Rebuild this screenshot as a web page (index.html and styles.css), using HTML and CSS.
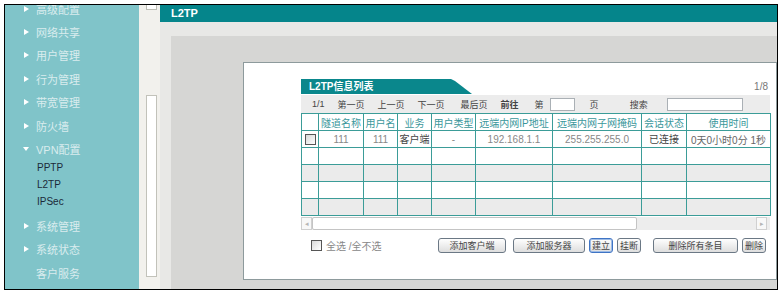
FILE: index.html
```html
<!DOCTYPE html>
<html lang="zh-CN">
<head>
    <meta charset="UTF-8">
    <title>L2TP</title>
    <link rel="stylesheet" href="styles.css">
</head>
<body>
    <div class="frame">
        <div class="sidebar">
            <ul class="nav">
                <li><a class="nav-link"><i class="arrow"></i>高级配置</a></li>
                <li><a class="nav-link"><i class="arrow"></i>网络共享</a></li>
                <li><a class="nav-link"><i class="arrow"></i>用户管理</a></li>
                <li><a class="nav-link"><i class="arrow"></i>行为管理</a></li>
                <li><a class="nav-link"><i class="arrow"></i>带宽管理</a></li>
                <li><a class="nav-link"><i class="arrow"></i>防火墙</a></li>
                <li class="open">
                    <a class="nav-link"><i class="arrow"></i>VPN配置</a>
                    <ul class="sub">
                        <li>PPTP</li>
                        <li>L2TP</li>
                        <li>IPSec</li>
                    </ul>
                </li>
                <li><a class="nav-link"><i class="arrow"></i>系统管理</a></li>
                <li><a class="nav-link"><i class="arrow"></i>系统状态</a></li>
                <li><a class="nav-link plain">客户服务</a></li>
            </ul>
        </div>
        <div class="vscroll">
            <div class="vscroll-btn"></div>
            <div class="vscroll-thumb"></div>
        </div>
        <div class="main">
            <div class="titlebar">L2TP</div>
            <div class="stage">
                <div class="panel">
                    <div class="box">
                        <div class="box-head">
                            <div class="tab">L2TP信息列表</div>
                            <span class="count">1/8</span>
                        </div>
                        <div class="pager">
                            <span>1/1</span>
                            <span>第一页</span>
                            <span>上一页</span>
                            <span>下一页</span>
                            <span class="wide">最后页</span>
                            <span class="goto">前往</span>
                            <span class="wide">第</span>
                            <span class="pg-input"></span>
                            <span class="after-input">页</span>
                            <span class="search-label">搜索</span>
                            <span class="search-input"></span>
                        </div>
                        <table class="grid">
                            <colgroup>
                                <col class="c-chk">
                                <col class="c-name">
                                <col class="c-user">
                                <col class="c-biz">
                                <col class="c-type">
                                <col class="c-ip">
                                <col class="c-mask">
                                <col class="c-state">
                                <col class="c-time">
                            </colgroup>
                            <tr>
                                <th></th>
                                <th>隧道名称</th>
                                <th>用户名</th>
                                <th>业务</th>
                                <th>用户类型</th>
                                <th>远端内网IP地址</th>
                                <th>远端内网子网掩码</th>
                                <th>会话状态</th>
                                <th>使用时间</th>
                            </tr>
                            <tr>
                                <td><span class="check"></span></td>
                                <td>111</td>
                                <td>111</td>
                                <td class="dark">客户端</td>
                                <td>-</td>
                                <td>192.168.1.1</td>
                                <td>255.255.255.0</td>
                                <td class="dark">已连接</td>
                                <td class="time">0天0小时0分 1秒</td>
                            </tr>
                            <tr><td></td><td></td><td></td><td></td><td></td><td></td><td></td><td></td><td></td></tr>
                            <tr class="alt"><td></td><td></td><td></td><td></td><td></td><td></td><td></td><td></td><td></td></tr>
                            <tr><td></td><td></td><td></td><td></td><td></td><td></td><td></td><td></td><td></td></tr>
                            <tr class="alt"><td></td><td></td><td></td><td></td><td></td><td></td><td></td><td></td><td></td></tr>
                        </table>
                        <div class="hscroll">
                            <span class="hs-btn">&#9666;</span>
                            <span class="hs-thumb"></span>
                            <span class="hs-track"></span>
                            <span class="hs-btn">&#9656;</span>
                        </div>
                        <div class="actions">
                            <span class="check"></span>
                            <span class="select-all">全选 /全不选</span>
                            <div class="btns">
                                <button class="btn btn-md">添加客户端</button>
                                <button class="btn btn-lg gap">添加服务器</button>
                                <button class="btn btn-sm focus">建立</button>
                                <button class="btn btn-sm">挂断</button>
                                <button class="btn btn-xl far">删除所有条目</button>
                                <button class="btn btn-sm">删除</button>
                            </div>
                        </div>
                    </div>
                </div>
            </div>
        </div>
    </div>
</body>
</html>
```

FILE: styles.css
```css
body {
    margin: 0;
    background-color: #fff;
    font-family: "Liberation Sans", "Noto Sans CJK SC", sans-serif;
}
.frame {
    margin: 4px;
    width: 772px;
    height: 284px;
    border: 1px solid #000;
    display: flex;
    overflow: hidden;
}

/* left menu */
.sidebar {
    width: 134px;
    flex-shrink: 0;
    background-color: #80c4c9;
    overflow: hidden;
}
.nav {
    list-style: none;
    margin: -8px 0 0;
    padding: 0;
}
.nav-link {
    display: flex;
    align-items: center;
    height: 23.4px;
    padding-left: 19px;
    font-size: 11px;
    color: #d9ecee;
}
.nav-link.plain {
    padding-left: 31px;
}
.arrow {
    width: 0;
    height: 0;
    border-left: 5px solid #fff;
    border-top: 3.5px solid transparent;
    border-bottom: 3.5px solid transparent;
    margin-right: 7px;
}
.open .arrow {
    border-left: 3px solid transparent;
    border-right: 3px solid transparent;
    border-top: 4px solid #fff;
    border-bottom: 0;
    margin-left: -1px;
    margin-right: 7px;
}
.sub {
    list-style: none;
    margin: -2px 0 4.5px;
    padding: 0;
}
.sub li {
    height: 17px;
    line-height: 17px;
    padding-left: 32px;
    font-size: 10px;
    color: #1b2a3a;
}

/* fake window scrollbar */
.vscroll {
    width: 21px;
    flex-shrink: 0;
    background-color: #f2f1ed;
}
.vscroll-btn {
    margin-left: 7px;
    width: 9px;
    height: 4px;
    border: 1px solid #bdbdb5;
    border-top: 0;
    background-color: #fff;
}
.vscroll-thumb {
    margin: 85px 0 0 7px;
    width: 9px;
    height: 180px;
    border: 1px solid #c2c2ba;
    background-color: #fff;
}

/* content */
.main {
    width: 617px;
    flex-shrink: 0;
    display: flex;
    flex-direction: column;
    background-color: #e8e8e6;
}
.titlebar {
    height: 17px;
    line-height: 17px;
    padding-left: 11px;
    background-color: #05858b;
    color: #fff;
    font-size: 11px;
    font-weight: bold;
}
.stage {
    flex: 1;
    padding: 14px 0 0 11px;
}
.panel {
    height: 100%;
    box-sizing: border-box;
    padding: 26px 0 0 72px;
    background-color: #d6d6d4;
}
.box {
    width: 534px;
    height: 218px;
    box-sizing: border-box;
    padding: 16px 6px 0 57px;
    border: 1px solid #8d9a9c;
    background-color: #fff;
}
.box-head {
    display: flex;
    align-items: center;
    height: 15px;
}
.tab {
    width: 171px;
    height: 15px;
    line-height: 15px;
    box-sizing: border-box;
    padding-left: 8px;
    background-color: #0a878c;
    clip-path: polygon(0 0, 150px 0, 154px 2px, 100% 100%, 0 100%);
    color: #fff;
    font-size: 10px;
    font-weight: bold;
}
.count {
    margin-left: auto;
    padding-right: 2px;
    font-size: 10px;
    color: #777;
}
.pager {
    display: flex;
    align-items: center;
    gap: 13px;
    height: 18px;
    margin-top: 1px;
    padding-left: 11px;
    background-color: #ececec;
    font-size: 9px;
    color: #444;
}
.pager .wide {
    margin-left: 3px;
}
.pager .goto {
    font-weight: bold;
}
.pg-input {
    width: 25px;
    height: 13px;
    margin-left: -7px;
    box-sizing: border-box;
    border: 1px solid #aab0b5;
    background-color: #fff;
}
.pager .after-input {
    margin-left: 2px;
}
.pager .search-label {
    margin-left: 18px;
}
.search-input {
    width: 76px;
    height: 13px;
    margin-left: 6px;
    box-sizing: border-box;
    border: 1px solid #aab0b5;
    background-color: #fff;
}

.grid {
    width: 469px;
    table-layout: fixed;
    border-collapse: collapse;
    font-size: 10px;
}
.grid th,
.grid td {
    height: 16px;
    padding: 0;
    border: 1px solid #3b9c98;
    text-align: center;
    font-weight: normal;
    color: #888;
    white-space: nowrap;
    overflow: hidden;
}
.grid th {
    color: #3a979b;
}
.grid td.dark {
    color: #444;
    vertical-align: top;
}
.grid td.time {
    color: #666;
}
.grid tr.alt td {
    background-color: #ebebeb;
}
.c-chk { width: 17px; }
.c-name { width: 45px; }
.c-user { width: 34px; }
.c-biz { width: 34px; }
.c-type { width: 44px; }
.c-ip { width: 77px; }
.c-mask { width: 89px; }
.c-state { width: 45px; }
.c-time { width: 84px; }

.check {
    display: inline-block;
    width: 9px;
    height: 9px;
    border: 1px solid #555;
    background: linear-gradient(135deg, #d8d8d8, #fff);
    vertical-align: middle;
}

.hscroll {
    display: flex;
    height: 13px;
    margin-top: 1px;
    background-color: #ededed;
}
.hs-btn {
    width: 11px;
    box-sizing: border-box;
    border: 1px solid #d0d0d0;
    background-color: #f8f8f8;
    color: #b5b5b5;
    font-size: 7px;
    line-height: 11px;
    text-align: center;
}
.hs-thumb {
    width: 325px;
    box-sizing: border-box;
    border: 1px solid #c4c4c4;
    border-radius: 2px;
    background-color: #fff;
}
.hs-track {
    flex: 1;
}
.hs-btn:last-child {
    margin-right: 3px;
}

.actions {
    display: flex;
    align-items: center;
    height: 16px;
    margin-top: 7px;
    padding-left: 10px;
}
.select-all {
    margin-left: 4px;
    font-size: 10px;
    color: #888;
}
.btns {
    display: flex;
    margin-left: auto;
    margin-right: 4px;
}
.btn {
    height: 15px;
    margin-left: 4px;
    padding: 0;
    border: 1px solid #6b7885;
    border-radius: 3px;
    background: linear-gradient(#fefefe, #dedede);
    font-family: "Liberation Sans", "Noto Sans CJK SC", sans-serif;
    font-size: 9px;
    color: #444;
}
.btn.gap {
    margin-left: 7px;
}
.btn.far {
    margin-left: 12px;
}
.btn.focus {
    border: 1px solid #3f74c4;
    box-shadow: inset 0 0 0 1px #9dbbe6;
}
.btn-sm { width: 24px; }
.btn-md { width: 68px; }
.btn-lg { width: 72px; }
.btn-xl { width: 85px; }
```
